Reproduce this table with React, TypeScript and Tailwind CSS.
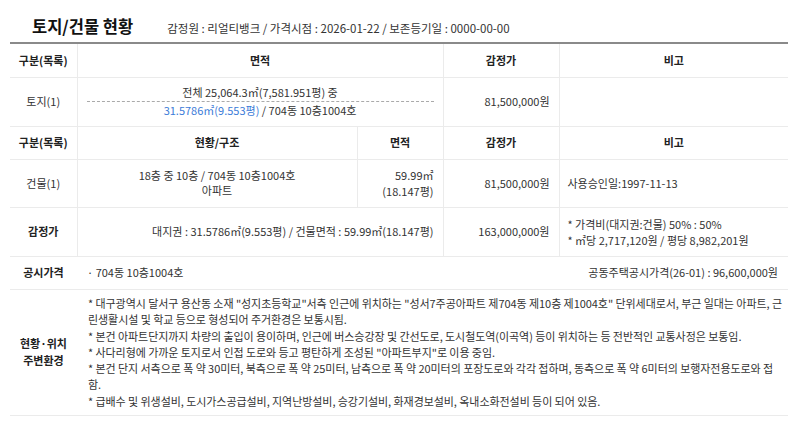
import React from "react";

const font = { fontFamily: '"Noto Sans CJK KR", "Noto Sans", sans-serif' };

export default function App() {
  const th = "font-bold text-[11px] text-[#222] text-center align-middle border-b border-[#ebebeb]";
  const td = "text-[11px] text-[#333] align-middle border-b border-[#ebebeb]";
  const vr = "border-r border-[#ebebeb]";
  return (
    <div className="w-[800px] h-[422px] bg-white" style={font}>
      <div className="flex items-end pl-[32px] pt-[14px] pb-[4px] gap-[34px]">
        <div className="text-[16.5px] font-bold text-[#111] leading-[24px]">토지/건물 현황</div>
        <div className="text-[11.5px] text-[#333] leading-[20px]">감정원 : 리얼티뱅크 / 가격시점 : 2026-01-22 / 보존등기일 : 0000-00-00</div>
      </div>
      <div className="ml-[10px] w-[778px] border-t-2 border-[#8a8a8a]">
        <table className="w-full table-fixed border-collapse">
          <colgroup>
            <col className="w-[67px]" />
            <col className="w-[280px]" />
            <col className="w-[86px]" />
            <col className="w-[116px]" />
            <col className="w-[229px]" />
          </colgroup>
          <tbody>
            <tr className="h-[33px]">
              <td className={`${th} ${vr}`}>구분(목록)</td>
              <td colSpan={2} className={`${th} ${vr}`}>면적</td>
              <td className={`${th} ${vr}`}>감정가</td>
              <td className={th}>비고</td>
            </tr>
            <tr className="h-[49px]">
              <td className={`${td} ${vr} text-center`}>토지(1)</td>
              <td colSpan={2} className={`${td} ${vr} px-[9px] text-center`}>
                <div className="leading-[15px] border-b border-dashed border-[#aaa] pb-[1px]">전체 25,064.3㎡(7,581.951평) 중</div>
                <div className="leading-[15px] pt-[1px]">
                  <span className="text-[#3b7bd8]">31.5786㎡(9.553평)</span> / 704동 10층1004호
                </div>
              </td>
              <td className={`${td} ${vr} text-right pr-[9px]`}>81,500,000원</td>
              <td className={td}></td>
            </tr>
            <tr className="h-[33px]">
              <td className={`${th} ${vr}`}>구분(목록)</td>
              <td className={`${th} ${vr}`}>현황/구조</td>
              <td className={`${th} ${vr}`}>면적</td>
              <td className={`${th} ${vr}`}>감정가</td>
              <td className={th}>비고</td>
            </tr>
            <tr className="h-[48px]">
              <td className={`${td} ${vr} text-center`}>건물(1)</td>
              <td className={`${td} ${vr} text-center leading-[15px]`}>
                <div>18층 중 10층 / 704동 10층1004호</div>
                <div>아파트</div>
              </td>
              <td className={`${td} ${vr} text-right pr-[9px] leading-[16px]`}>
                <div>59.99㎡</div>
                <div>(18.147평)</div>
              </td>
              <td className={`${td} ${vr} text-right pr-[9px]`}>81,500,000원</td>
              <td className={`${td} pl-[8px]`}>사용승인일:1997-11-13</td>
            </tr>
            <tr className="h-[49px]">
              <td className={`${th} ${vr}`}>감정가</td>
              <td colSpan={2} className={`${td} ${vr} text-right pr-[9px]`}>대지권 : 31.5786㎡(9.553평) / 건물면적 : 59.99㎡(18.147평)</td>
              <td className={`${td} ${vr} text-right pr-[9px]`}>163,000,000원</td>
              <td className={`${td} pl-[8px] leading-[16px]`}>
                <div>* 가격비(대지권:건물) 50% : 50%</div>
                <div>* ㎡당 2,717,120원 / 평당 8,982,201원</div>
              </td>
            </tr>
            <tr className="h-[33px]">
              <td className={th}>공시가격</td>
              <td colSpan={4} className={`${td} px-[10px]`}>
                <div className="flex justify-between">
                  <span>· 704동 10층1004호</span>
                  <span>공동주택공시가격(26-01) : 96,600,000원</span>
                </div>
              </td>
            </tr>
            <tr className="h-[126px]">
              <td className={`${th} leading-[17px]`}>
                <div>현황·위치</div>
                <div>주변환경</div>
              </td>
              <td colSpan={4} className={`${td} pl-[11px] pr-0 leading-[16.3px]`}>
                <div className="w-[700px] break-all tracking-[-0.06px]">
                  <div>* 대구광역시 달서구 용산동 소재 "성지초등학교"서측 인근에 위치하는 "성서7주공아파트 제704동 제10층 제1004호" 단위세대로서, 부근 일대는 아파트, 근린생활시설 및 학교 등으로 형성되어 주거환경은 보통시됨.</div>
                  <div>* 본건 아파트단지까지 차량의 출입이 용이하며, 인근에 버스승강장 및 간선도로, 도시철도역(이곡역) 등이 위치하는 등 전반적인 교통사정은 보통임.</div>
                  <div>* 사다리형에 가까운 토지로서 인접 도로와 등고 평탄하게 조성된 "아파트부지"로 이용 중임.</div>
                  <div>* 본건 단지 서측으로 폭 약 30미터, 북측으로 폭 약 25미터, 남측으로 폭 약 20미터의 포장도로와 각각 접하며, 동측으로 폭 약 6미터의 보행자전용도로와 접<br />함.</div>
                  <div>* 급배수 및 위생설비, 도시가스공급설비, 지역난방설비, 승강기설비, 화재경보설비, 옥내소화전설비 등이 되어 있음.</div>
                </div>
              </td>
            </tr>
          </tbody>
        </table>
      </div>
    </div>
  );
}
